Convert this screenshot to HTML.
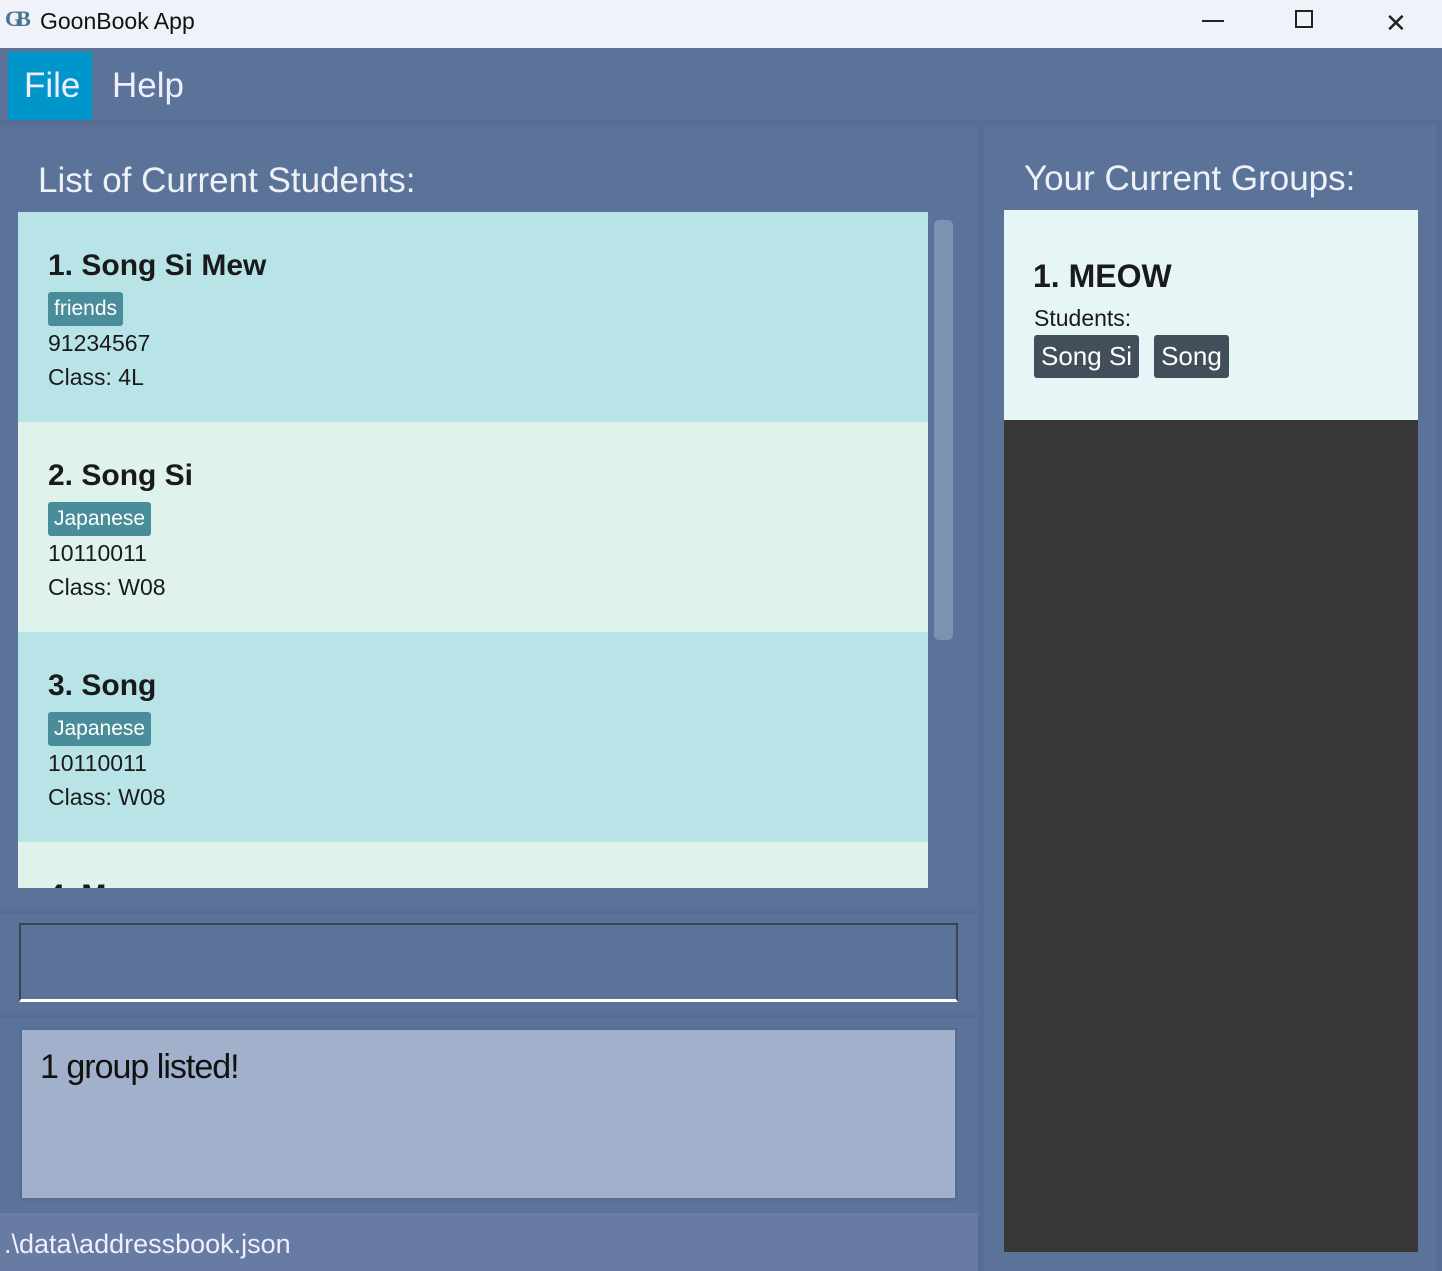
<!DOCTYPE html>
<html><head><meta charset="utf-8"><style>
*{margin:0;padding:0;box-sizing:border-box}
body{width:1442px;height:1271px;background:#5b7399;font-family:"Liberation Sans","DejaVu Sans",sans-serif;position:relative;overflow:hidden}
.a{position:absolute}
.title{left:0;top:0;width:1442px;height:48px;background:#eff3f9}
.card{left:18px;width:910px;height:210px;padding-left:30px}
.name{position:absolute;left:30px;top:37px;font-size:30px;color:#1a1a1a;font-weight:bold}
.tag{position:absolute;left:30px;top:80px;height:34px;line-height:34px;padding:0 6px;background:#4a8d9a;color:#fff;font-size:21px;border-radius:3px}
.l{position:absolute;left:30px;font-size:23px;color:#1a1a1a}
.gtag{display:inline-block;height:43px;line-height:43px;padding:0 7px;background:#424e5a;color:#fff;font-size:26px;border-radius:3px;margin-right:15px}
</style></head><body>
<div class="a title"></div>
<div class="a" style="left:5px;top:6px;font-size:22px;font-family:'Liberation Serif',serif;font-weight:bold;color:#4a7390">G<span style="margin-left:-6px">B</span></div>
<div class="a" style="left:40px;top:8px;font-size:23px;color:#111">GoonBook App</div>
<div class="a" style="left:1202px;top:20px;width:22px;height:2px;background:#222"></div>
<div class="a" style="left:1295px;top:10px;width:18px;height:18px;border:2px solid #222"></div>
<div class="a" style="left:1385px;top:8px;font-size:26px;color:#222">✕</div>
<div class="a" style="left:8px;top:52px;width:84px;height:68px;background:#0096c9"></div>
<div class="a" style="left:24px;top:66px;font-size:35px;color:#eef">File</div>
<div class="a" style="left:112px;top:66px;font-size:35px;color:#eef">Help</div>
<div class="a" style="left:0;top:120px;width:1442px;height:5px;background:#566e94"></div>
<div class="a" style="left:978px;top:125px;width:6px;height:1146px;background:#566e94"></div>
<div class="a" style="left:1436px;top:125px;width:6px;height:1146px;background:#566e94"></div>
<div class="a" style="left:38px;top:161px;font-size:35px;color:#eef2f8">List of Current Students:</div>
<div class="a" style="left:18px;top:212px;width:910px;height:676px;overflow:hidden">
 <div class="a card" style="left:0;top:0;background:#b8e4e8"><div class="name">1. Song Si Mew</div><div class="tag">friends</div><div class="l" style="top:118px">91234567</div><div class="l" style="top:152px">Class: 4L</div></div>
 <div class="a card" style="left:0;top:210px;background:#dff2ec"><div class="name">2. Song Si</div><div class="tag">Japanese</div><div class="l" style="top:118px">10110011</div><div class="l" style="top:152px">Class: W08</div></div>
 <div class="a card" style="left:0;top:420px;background:#b8e4e8"><div class="name">3. Song</div><div class="tag">Japanese</div><div class="l" style="top:118px">10110011</div><div class="l" style="top:152px">Class: W08</div></div>
 <div class="a card" style="left:0;top:630px;background:#dff2ec"><div class="name">4. Mew</div></div>
</div>
<div class="a" style="left:934px;top:220px;width:19px;height:420px;background:#7d91b2;border-radius:5px"></div>
<div class="a" style="left:0;top:908px;width:978px;height:6px;background:#566e94"></div>
<div class="a" style="left:19px;top:923px;width:939px;height:79px;border:2px solid #3a4454;border-bottom:3px solid #fff;background:#5b7399"></div>
<div class="a" style="left:0;top:1012px;width:978px;height:6px;background:#566e94"></div>
<div class="a" style="left:19px;top:1027px;width:939px;height:174px;background:#a1b1cb;border:3px solid #566e94"></div>
<div class="a" style="left:40px;top:1048px;font-size:34px;color:#111;letter-spacing:-1px">1 group listed!</div>
<div class="a" style="left:0;top:1213px;width:978px;height:58px;background:#687ca3"></div>
<div class="a" style="left:4px;top:1229px;font-size:27px;color:#eef">.\data\addressbook.json</div>
<div class="a" style="left:1024px;top:159px;font-size:35px;color:#eef2f8">Your Current Groups:</div>
<div class="a" style="left:1004px;top:210px;width:414px;height:210px;background:#e6f5f6">
 <div class="a" style="left:29px;top:48px;font-size:32px;font-weight:bold;color:#1a1a1a">1. MEOW</div>
 <div class="a" style="left:30px;top:95px;font-size:23px;color:#1a1a1a">Students:</div>
 <div class="a" style="left:30px;top:125px"><span class="gtag">Song Si</span><span class="gtag">Song</span></div>
</div>
<div class="a" style="left:1004px;top:420px;width:414px;height:832px;background:#383838"></div>
</body></html>
